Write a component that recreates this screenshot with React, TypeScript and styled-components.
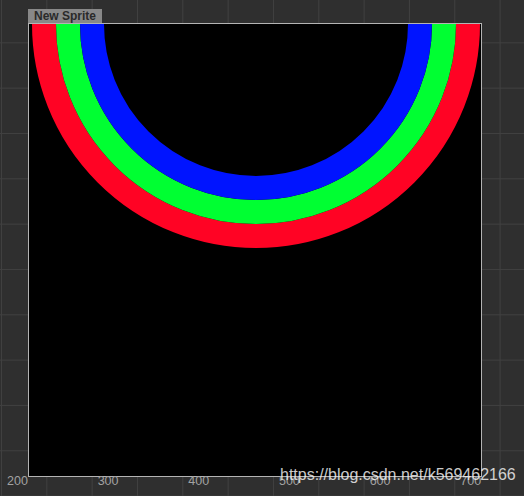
import React from "react";
import styled, { createGlobalStyle } from "styled-components";

const GlobalStyle = createGlobalStyle`
  html, body {
    margin: 0;
    padding: 0;
    background: #2f2f2f;
  }
`;

const Canvas = styled.div`
  position: relative;
  width: 524px;
  height: 496px;
  overflow: hidden;
  box-sizing: border-box;
  padding: 9px 0 0 28px;
  font-family: "Liberation Sans", Arial, sans-serif;
  background-color: #2f2f2f;
  background-image:
    linear-gradient(to right, #404040 1px, transparent 1px),
    linear-gradient(to bottom, #404040 1px, transparent 1px);
  background-size: 45.33px 45.33px;
  background-position: 1px -3px;
`;

const SpriteNode = styled.div`
  display: flex;
  flex-direction: column;
  align-items: flex-start;
`;

const SpriteLabel = styled.div`
  height: 14px;
  line-height: 14px;
  padding: 0 6px 0 6px;
  background: #888888;
  color: #2a2a2a;
  font-size: 12px;
  font-weight: bold;
`;

const SpriteBox = styled.div`
  width: 452px;
  height: 452px;
  border: 1px solid #b4b4b4;
  background: #000;
  overflow: hidden;
`;

const Ruler = styled.div`
  position: absolute;
  left: 2px;
  top: 474px;
  display: flex;
`;

const Tick = styled.span`
  width: 90.67px;
  padding-left: 5px;
  box-sizing: border-box;
  font-size: 12.5px;
  line-height: 14px;
  color: #a2a2a2;
`;

const Watermark = styled.div`
  position: absolute;
  left: 280px;
  top: 466px;
  font-size: 16px;
  line-height: 18px;
  color: rgba(240, 240, 240, 0.85);
  white-space: nowrap;
`;

const rings = [
  { r: 212, color: "#ff0324" },
  { r: 188, color: "#00ff32" },
  { r: 164, color: "#0014ff" },
];

const Rings = () => (
  <svg width="452" height="452" viewBox="0 0 452 452">
    {rings.map((ring) => (
      <circle
        key={ring.color}
        cx="227"
        cy="0"
        r={ring.r}
        fill="none"
        stroke={ring.color}
        strokeWidth="24"
      />
    ))}
  </svg>
);

export default function App() {
  return (
    <>
      <GlobalStyle />
      <Canvas>
        <SpriteNode>
          <SpriteLabel>New Sprite</SpriteLabel>
          <SpriteBox>
            <Rings />
          </SpriteBox>
        </SpriteNode>
        <Ruler>
          {[200, 300, 400, 500, 600, 700].map((n) => (
            <Tick key={n}>{n}</Tick>
          ))}
        </Ruler>
        <Watermark>https://blog.csdn.net/k569462166</Watermark>
      </Canvas>
    </>
  );
}
